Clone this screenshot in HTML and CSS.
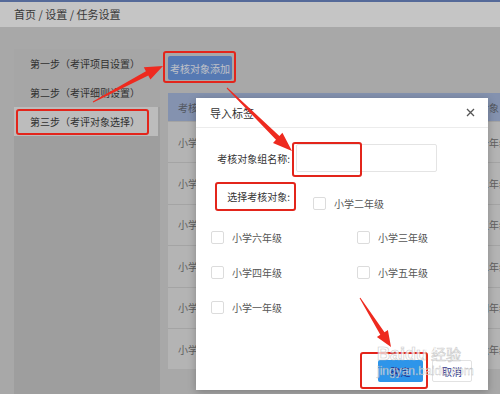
FILE: index.html
```html
<!DOCTYPE html>
<html lang="zh-CN">
    <head>
        <meta charset="UTF-8" />
        <meta name="viewport" content="width=device-width, initial-scale=1.0" />
        <title>任务设置</title>
        <link rel="stylesheet" href="styles.css">
    </head>
    <body>
        <div class="topline"></div>
        <div class="crumb">首页 / 设置 / 任务设置</div>
        <div class="main">
            <aside class="steps">
                <div class="step">第一步（考评项目设置）</div>
                <div class="step">第二步（考评细则设置）</div>
                <div class="step active">第三步（考评对象选择）</div>
            </aside>
            <section class="content">
                <button class="add">考核对象添加</button>
                <div class="grid">
                    <div class="grid-head">
                        <div class="cell">考核对象组名称</div>
                        <div class="cell2">考核对象</div>
                    </div>
                    <div class="grid-row"><div class="cell">小学低年级组</div><div class="cell2">小学一年级</div></div>
                    <div class="grid-row"><div class="cell">小学中年级组</div><div class="cell2">小学三年级</div></div>
                    <div class="grid-row"><div class="cell">小学高年级组</div><div class="cell2">小学五年级</div></div>
                    <div class="grid-row"><div class="cell">小学二年级组</div><div class="cell2">小学二年级</div></div>
                    <div class="grid-row"><div class="cell">小学四年级组</div><div class="cell2">小学四年级</div></div>
                    <div class="grid-row"><div class="cell">小学六年级组</div><div class="cell2">小学六年级</div></div>
                </div>
            </section>
        </div>

        <div class="mask"></div>

        <div class="dialog">
            <div class="dialog-title">
                <span>导入标签</span>
                <svg class="close" width="9" height="9" viewBox="0 0 9 9">
                    <path d="M1 1 L8 8 M8 1 L1 8" stroke="#555" stroke-width="1.3" fill="none" />
                </svg>
            </div>
            <div class="dialog-body">
                <div class="field">
                    <label class="field-label">考核对象组名称:</label>
                    <input class="field-input" type="text">
                </div>
                <div class="field pick">
                    <label class="field-label">选择考核对象:</label>
                    <label class="check first"><span class="box"></span>小学二年级</label>
                </div>
                <div class="checks">
                    <label class="check"><span class="box"></span>小学六年级</label>
                    <label class="check"><span class="box"></span>小学三年级</label>
                    <label class="check"><span class="box"></span>小学四年级</label>
                    <label class="check"><span class="box"></span>小学五年级</label>
                    <label class="check"><span class="box"></span>小学一年级</label>
                </div>
            </div>
            <div class="dialog-foot">
                <button class="btn ok">确定</button>
                <button class="btn cancel">取消</button>
            </div>
        </div>

        <!-- marcações do tutorial -->
        <svg class="marks" width="500" height="394" viewBox="0 0 500 394">
            <g fill="none" stroke="#e3251b" stroke-width="2">
                <rect x="17" y="110" width="131" height="24" rx="2" />
                <rect x="164" y="52" width="71" height="30" rx="2" />
                <rect x="293" y="143" width="68" height="33" rx="2" />
                <rect x="216" y="183" width="79" height="27" rx="2" />
                <rect x="361" y="353" width="66" height="35" rx="2" />
            </g>
            <g fill="#ee2a1f">
                <polygon points="93.2,102.4 148.3,75.6 150.4,79.6 163,66 143.8,67.2 145.9,71.2 92.8,101.6" />
                <polygon points="226.7,88.4 276.0,139.8 273.0,143.1 292,151 282.4,132.7 279.4,136.0 227.3,87.6" />
                <polygon points="359.6,298.3 380.3,334.8 376.9,337.0 391,347 387.9,330.0 384.5,332.2 360.4,297.7" />
            </g>
        </svg>

        <div class="watermark">
            <svg class="paw" width="26" height="22" viewBox="0 0 26 22">
                <g fill="none" stroke="#fff" stroke-width="1.5">
                    <circle cx="5" cy="8" r="3" />
                    <circle cx="11" cy="4" r="3" />
                    <circle cx="18" cy="5" r="3" />
                    <circle cx="22" cy="11" r="3" />
                    <ellipse cx="13" cy="15" rx="5" ry="4.5" />
                </g>
            </svg>
            <div class="wm-top"><span class="wm-bai">Bai</span><span class="wm-du">du</span><span class="wm-jy">经验</span></div>
            <div class="wm-url">jingyan.baidu.com</div>
        </div>
    </body>
</html>
```

FILE: styles.css
```css
html, body {
    margin: 0;
    height: 100%;
    overflow: hidden;
}
body {
    position: relative;
    background: #d8d8d8;
    color: #444;
    font: normal 10px "Noto Sans CJK SC", "Noto Sans", sans-serif;
}
.topline {
    height: 2px;
    background: #6d88c4;
}
.crumb {
    height: 25px;
    line-height: 25px;
    padding-left: 14px;
    background: #fdfdfd;
    color: #4a4a4a;
    font-size: 11px;
}
.main {
    display: flex;
    height: 367px;
    box-sizing: border-box;
    padding: 22px 0 0 14px;
}
.steps {
    flex: 0 0 146px;
    background: #cbcbcb;
}
.step {
    height: 29px;
    line-height: 29px;
    padding-left: 16px;
    background: #d5d5d5;
    color: #3e3e3e;
    white-space: nowrap;
}
.step.active {
    background: #f1f1f1;
    margin-right: 2px;
}
.content {
    flex: 1;
    min-width: 0;
    margin-left: 8px;
    padding-top: 7px;
}
.add {
    display: block;
    width: 64px;
    height: 24px;
    padding: 0;
    border: 0;
    border-radius: 2px;
    background: #6f9ce6;
    color: #f4f7ff;
    font: 10px "Noto Sans CJK SC", sans-serif;
}
.grid {
    margin-top: 13px;
    width: 360px;
}
.grid-head {
    display: flex;
    align-items: center;
    height: 28px;
    background: #a9bbe0;
    color: #6a6f7a;
}
.grid-row {
    display: flex;
    align-items: center;
    height: 41.4px;
    box-sizing: border-box;
    border-top: 1px solid #d2d2d2;
    background: #e7e7e7;
    color: #7a7a7a;
}
.cell {
    flex: 0 0 281px;
    padding-left: 10px;
}
.cell2 {
    white-space: nowrap;
}

.mask {
    position: absolute;
    inset: 0;
    background: rgba(0, 0, 0, 0.22);
}

.dialog {
    position: absolute;
    left: 196px;
    top: 98px;
    width: 292px;
    height: 292px;
    display: flex;
    flex-direction: column;
    background: #fff;
    box-shadow: 0 2px 8px rgba(0, 0, 0, 0.25);
}
.dialog-title {
    display: flex;
    align-items: center;
    justify-content: space-between;
    height: 30px;
    box-sizing: border-box;
    padding: 0 13px 0 14px;
    border-bottom: 1px solid #ececec;
    color: #333;
    font-size: 11px;
}
.dialog-body {
    padding: 16px 0 0 15px;
}
.field {
    display: flex;
    align-items: center;
}
.field-label {
    width: 79px;
    text-align: right;
    color: #333;
}
.field-input {
    width: 141px;
    height: 28px;
    box-sizing: border-box;
    margin-left: 6px;
    border: 1px solid #e4e4e4;
    border-radius: 2px;
    outline: none;
}
.pick {
    margin-top: 11px;
    height: 27px;
    align-items: flex-end;
}
.pick .field-label {
    line-height: 27px;
}
.check {
    display: flex;
    align-items: center;
    height: 13px;
    color: #555;
}
.check.first {
    margin-left: 23px;
}
.box {
    width: 13px;
    height: 13px;
    box-sizing: border-box;
    margin-right: 8px;
    border: 1px solid #dcdcdc;
    border-radius: 2px;
    background: #fff;
}
.checks {
    display: grid;
    grid-template-columns: 146px 1fr;
    grid-auto-rows: 35px;
    align-items: center;
    margin-top: 10px;
}
.dialog-foot {
    display: flex;
    justify-content: flex-end;
    gap: 9px;
    margin-top: auto;
    padding: 0 16px 8px 0;
}
.btn {
    height: 22px;
    padding: 0;
    border-radius: 2px;
    font: 10px "Noto Sans CJK SC", sans-serif;
}
.ok {
    width: 45px;
    border: 0;
    background: #2d95ea;
    color: #1b2a8c;
}
.cancel {
    width: 40px;
    border: 1px solid #e2e2e2;
    background: #fff;
    color: #2a2f8a;
}

.marks {
    position: absolute;
    left: 0;
    top: 0;
}

.watermark {
    position: absolute;
    left: 377px;
    top: 333px;
    width: 100px;
    opacity: 0.75;
    color: #fff;
    font-family: "Liberation Sans", sans-serif;
}
.paw {
    position: absolute;
    left: 40px;
    top: 0;
    opacity: 0.7;
}
.wm-top {
    margin-top: 12px;
    font-size: 18px;
    font-weight: bold;
    line-height: 18px;
    -webkit-text-stroke: 0.6px #bbb;
}
.wm-du {
    margin-right: 4px;
}
.wm-jy {
    font-family: "Noto Sans CJK SC", sans-serif;
    font-size: 15px;
    font-weight: normal;
}
.wm-url {
    margin-top: 2px;
    font-size: 12px;
    line-height: 13px;
    -webkit-text-stroke: 0.3px #999;
}
```
